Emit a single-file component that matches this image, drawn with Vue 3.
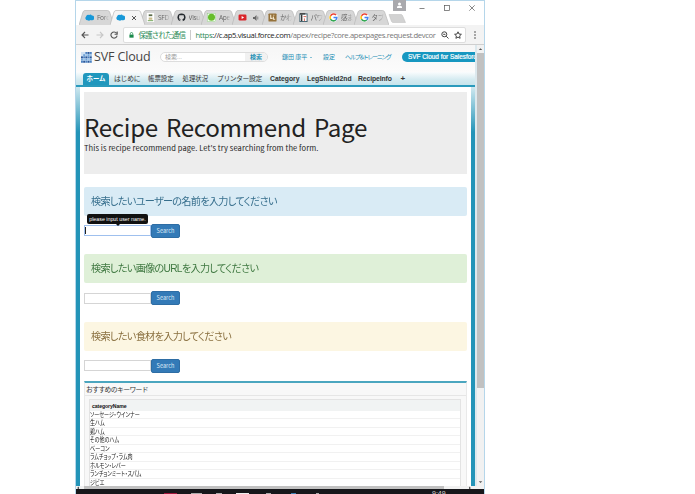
<template>
  <div class="screen">
    <div class="window">
      <div class="titlebar">
        <div class="tabs">
          <div class="tab" :class="{ active: tab.active }" v-for="(tab, index) in tabs" :key="index">
            <svg class="shape" viewBox="0 0 35 15">
              <path d="M0 15 L4 2 Q4.6 .5 6 .5 H28.5 Q30 .5 30.6 2 L35 15" />
            </svg>
            <svg class="icon" viewBox="0 0 10 10">
              <path v-if="tab.icon === 'cloud'" fill="#1798d8" d="M2.8 8a2.3 2.3 0 0 1-1.6-4A2.2 2.2 0 0 1 4.6 2.300a2 2 0 0 1 3 .5A2.600 2.600 0 0 1 7.800 8Q6.500 8.300 6 7.900 4.500 9 2.800 8Z" />
              <g v-else-if="tab.icon === 'sfdc'">
                <rect x="1" y="0" width="8" height="10" fill="#fff" />
                <path d="M3 1.500h4v2H3z" fill="#5c6c4a" />
                <path d="M3 5h4v2.500H3z" fill="#c9bd8b" />
                <path d="M2 8.500h6" stroke="#6ba04e" />
              </g>
              <path v-else-if="tab.icon === 'github'" fill="#24292e" d="M5 .6A4.400 4.400 0 0 0 3.600 9.200V8C2.400 8.200 2.200 7.400 1.800 7 2.700 6.800 2.900 7.800 3.700 7.400 3.800 7 4 6.800 4.100 6.700 2.700 6.500 2.200 5.800 2.200 4.600 2.200 4 2.400 3.600 2.700 3.300 2.600 2.900 2.600 2.500 2.800 2.100 3.200 2.100 3.600 2.400 4 2.600H6C6.400 2.400 6.800 2.100 7.200 2.100 7.400 2.500 7.400 2.900 7.300 3.300 7.600 3.600 7.800 4 7.800 4.600 7.800 5.800 7.200 6.500 5.900 6.700 6.200 7 6.400 7.300 6.400 7.800V9.200A4.400 4.400 0 0 0 5 .6Z" />
              <g v-else-if="tab.icon === 'apex'">
                <rect x=".3" y=".3" width="9.400" height="9.400" fill="#f4fff0" stroke="#8ac67b" stroke-width=".5" />
                <circle cx="5" cy="4.600" r="3.900" fill="#66bd2b" />
              </g>
              <g v-else-if="tab.icon === 'youtube'">
                <rect x=".6" y="1.800" width="8.800" height="6.400" rx="1.300" fill="#d9252a" />
                <path d="M4 3.300 6.800 5 4 6.700Z" fill="#fff" />
              </g>
              <g v-else-if="tab.icon === 'brown'">
                <rect x=".5" y=".5" width="9" height="9" rx="1" fill="#96723a" />
                <path d="M3 2v4h2M6 4v3h2M6 2.500h1" fill="none" stroke="#f5ead0" stroke-width="1.200" />
              </g>
              <g v-else-if="tab.icon === 'note'">
                <rect x="1" y="1" width="8" height="8.500" fill="#fff" stroke="#395a68" />
                <path d="M1 1h6M3 2v7" stroke="#333" stroke-width="1.500" />
                <path d="M5 4h3M6 6v3" stroke="#d65a4b" />
              </g>
              <g v-else>
                <circle cx="5" cy="5" r="5" fill="#fff" />
                <g fill="none" stroke-width="1.700">
                  <path d="M7.900 2.300A3.800 3.800 0 0 0 1.700 3.200" stroke="#ea4335" />
                  <path d="M1.700 3.200a3.800 3.800 0 0 0 0 3.600" stroke="#fbbc05" />
                  <path d="M1.700 6.800a3.800 3.800 0 0 0 5.800 1" stroke="#34a853" />
                  <path d="M7.500 7.800Q8.700 6.800 8.700 5H5" stroke="#4285f4" />
                </g>
              </g>
            </svg>
            <svg v-if="tab.active" class="close" viewBox="0 0 6 6"><path d="M1 1l4 4M5 1L1 5" /></svg>
            <svg v-else-if="tab.icon === 'youtube'" class="sound" viewBox="0 0 6 6">
              <path d="M0 2h1.500L3.500 0v6L1.500 4H0zM4.500 1.500v3h.7v-3z" />
            </svg>
            <span v-else class="label">{{ tab.label }}</span>
          </div>
          <svg class="newtab" viewBox="0 0 18 9"><path d="M1 .5H13Q14 .5 14.500 1.500L17.500 8.500H5Q4 8.500 3.500 7.500Z" /></svg>
        </div>
        <div class="controls">
          <svg class="user" viewBox="0 0 13 11"><rect width="13" height="11" /><circle cx="6.500" cy="4" r="1.500" /><path d="M4 8V6.500Q6.500 5 9 6.500V8Z" /></svg>
          <svg viewBox="0 0 8 8"><path d="M1.500 4.500h5" /></svg>
          <svg viewBox="0 0 8 8"><rect x="1.500" y="1.500" width="5" height="5" /></svg>
          <svg viewBox="0 0 8 8"><path d="M1.300 1.300l5.400 5.400M6.700 1.300L1.300 6.700" /></svg>
        </div>
      </div>

      <div class="toolbar">
        <svg class="nav" viewBox="0 0 8 8"><path d="M7.500 4H1M4 1 1 4l3 3" /></svg>
        <svg class="nav off" viewBox="0 0 8 8"><path d="M.5 4H7M4 1l3 3-3 3" /></svg>
        <svg class="nav" viewBox="0 0 8 8"><path d="M6.600 2.300A3.100 3.100 0 1 0 7.100 4.600M7.200.6v2.600H4.600" /></svg>
        <div class="address">
          <svg class="lock" viewBox="0 0 6 7"><path d="M.5 3h5v3.700h-5z" /><path class="ring" d="M1.600 3V1.900a1.400 1.400 0 0 1 2.800 0V3" /></svg>
          <span class="secure">保護された通信</span>
          <span class="sep"></span>
          <span class="url"><b>https</b>://c.ap5.visual.force.com<i>/apex/recipe?core.apexpages.request.devcor</i></span>
          <svg class="mag" viewBox="0 0 8 8"><circle cx="3.300" cy="3.300" r="2.500" /><path d="M5.200 5.200 7.500 7.500M2.200 3.300h2.200" /></svg>
          <svg class="star" viewBox="0 0 8 8"><path d="M4 .8l1 2.200 2.400.3-1.800 1.600.5 2.400L4 6.100 1.900 7.300l.5-2.400L.6 3.300 3 3Z" /></svg>
        </div>
        <svg class="dots" viewBox="0 0 2 8"><circle cx="1" cy="1" r=".8" /><circle cx="1" cy="4" r=".8" /><circle cx="1" cy="7" r=".8" /></svg>
      </div>

      <div class="viewport">
        <div class="page">
          <header class="header">
            <svg class="logo" viewBox="0 0 11 11">
              <rect width="11" height="11" fill="#cfe0f2" />
              <rect v-for="(c, i) in logoCells" :key="i" :x="c.x" :y="c.y" width="1.900" height="1.900" :fill="c.color" />
            </svg>
            <span class="brand">SVF Cloud</span>
            <div class="search"><span class="hint">検索...</span><span class="go">検索</span></div>
            <span class="link person">鎌田 康平<em></em></span>
            <span class="link setup">設定</span>
            <span class="link help">ヘルプ＆トレーニング</span>
            <span class="appname">SVF Cloud for Salesforce</span>
          </header>
          <nav class="menu">
            <span class="home">ホーム</span>
            <span class="m1">はじめに</span>
            <span class="m2">帳票設定</span>
            <span class="m3">処理状況</span>
            <span class="m4">プリンター設定</span>
            <span class="m5 latin">Category</span>
            <span class="m6 latin">LegShield2nd</span>
            <span class="m7 latin">RecipeInfo</span>
            <span class="latin plus">+</span>
          </nav>
          <main class="main">
            <div class="jumbotron">
              <h1>Recipe Recommend Page</h1>
              <p>This is recipe recommend page. Let's try searching from the form.</p>
            </div>
            <section class="form" v-for="form in forms" :key="form.kind">
              <div class="alert" :class="form.kind"><span>{{ form.title }}</span></div>
              <div class="row">
                <div class="input" :class="{ focus: form.tip }">
                  <div v-if="form.tip" class="tooltip">{{ form.tip }}</div>
                </div>
                <button>Search</button>
              </div>
            </section>
            <section class="panel">
              <h2>おすすめのキーワード</h2>
              <div class="table">
                <div class="th">categoryName</div>
                <div class="td" v-for="item in categories" :key="item"><span>{{ item }}</span></div>
              </div>
            </section>
          </main>
        </div>
        <div class="vscroll">
          <svg viewBox="0 0 8 8"><path d="M2 5h4L4 3Z" /></svg>
          <div class="thumb"></div>
          <svg viewBox="0 0 8 8"><path d="M2 3h4L4 5Z" /></svg>
        </div>
      </div>
      <div class="hscroll">
        <svg viewBox="0 0 4 4"><path d="M3 .5v3L1 2Z" /></svg>
        <div></div>
        <svg viewBox="0 0 4 4"><path d="M1 .5v3L3 2Z" /></svg>
      </div>
      <div class="taskbar">
        <i class="red"></i><i class="grey"></i><i class="grey small"></i><i class="white"></i><i class="dot"></i><i class="dot blue"></i><i class="dot tiny"></i>
        <span>9:49</span>
      </div>
    </div>
  </div>
</template>

<script setup>
import { ref } from 'vue'

const tabs = ref([
  { icon: 'cloud', label: 'Forc' },
  { icon: 'cloud', label: '', active: true },
  { icon: 'sfdc', label: 'SFD' },
  { icon: 'github', label: 'Visu' },
  { icon: 'apex', label: 'Ape' },
  { icon: 'youtube', label: '' },
  { icon: 'brown', label: 'かわ' },
  { icon: 'note', label: 'パワ' },
  { icon: 'google', label: '感ま' },
  { icon: 'google', label: 'タブ' }
])

const forms = ref([
  { kind: 'info', title: '検索したいユーザーの名前を入力してください', tip: 'please input user name.' },
  { kind: 'success', title: '検索したい画像のURLを入力してください' },
  { kind: 'warning', title: '検索したい食材を入力してください' }
])

const categories = ref([
  'ソーセージ・ウインナー',
  '生ハム',
  '鶏ハム',
  'その他のハム',
  'ベーコン',
  'ラムチョップ・ラム肉',
  'ホルモン・レバー',
  'ランチョンミート・スパム',
  'ジビエ'
])

const shades = ['#4b80c0', '#6fa3d8', '#2b5596', '#9cc3e8']
const logoCells = []
for (let row = 0; row < 5; row++) {
  for (let col = 0; col < 5; col++) {
    if (row + col > 1) {
      logoCells.push({ x: col * 2.2, y: row * 2.2, color: shades[(row * 3 + col * 2) % 4] })
    }
  }
}
</script>

<style>
body {
  background: #fff;
  overflow: hidden;
}
</style>

<style scoped>
* {
  box-sizing: border-box;
}
.screen {
  height: 494px;
  padding-left: 75px;
  overflow: hidden;
  font-family: "Liberation Sans", "Noto Sans CJK JP", sans-serif;
  white-space: nowrap;
}
.window {
  width: 410px;
  height: 494px;
  display: flex;
  flex-direction: column;
  border: 1px solid #b5d6ea;
  border-bottom: none;
}
.window > div {
  flex: none;
}
svg {
  display: block;
  flex: none;
}

/* browser tabs */
.titlebar {
  height: 24px;
  display: flex;
  justify-content: space-between;
  background: #fff;
}
.tabs {
  width: 310px;
  display: flex;
  padding: 9px 0 0 3px;
}
.tab {
  position: relative;
  flex: none;
  display: flex;
  align-items: center;
  width: 35px;
  height: 15px;
  margin-right: -4.5px;
  padding-left: 6px;
}
.shape {
  position: absolute;
  left: 0;
  top: 0;
  width: 35px;
  height: 15px;
  fill: #d7d7d7;
  stroke: #b8b8b8;
  stroke-width: 0.7;
}
.active {
  z-index: 2;
}
.active .shape {
  fill: #f4f4f4;
}
.icon {
  position: relative;
  width: 9px;
  height: 9px;
}
.label {
  position: relative;
  width: 12px;
  margin-left: 3px;
  overflow: hidden;
  color: #666;
  font: 6.6px/10px "Open Sans", "Noto Sans CJK JP", sans-serif;
  letter-spacing: -0.3px;
  -webkit-mask-image: linear-gradient(to right, #000 50%, transparent);
}
.close,
.sound {
  position: relative;
  width: 6px;
  height: 6px;
  margin-left: 6px;
}
.close {
  stroke: #555;
}
.sound {
  fill: #666;
}
.newtab {
  width: 18px;
  height: 9px;
  margin: 4px 0 0 4px;
  fill: #d2d2d2;
  stroke: #bdbdbd;
  stroke-width: 0.5;
}
.controls {
  display: flex;
  gap: 17px;
  padding-right: 8px;
}
.controls svg {
  width: 8px;
  height: 8px;
  margin-top: 3px;
  fill: none;
  stroke: #555;
  stroke-width: 0.7;
}
.controls .user {
  width: 13px;
  height: 11px;
  margin: -1px -5px 0 0;
  stroke: none;
  fill: #fff;
}
.controls .user rect {
  fill: #a9a9ad;
}

/* address bar */
.toolbar {
  height: 20px;
  display: flex;
  align-items: center;
  padding: 0 8px 0 5px;
  background: #f3f3f3;
  border-bottom: 1px solid #cfcfcf;
}
.nav {
  width: 8px;
  height: 8px;
  margin-right: 6.5px;
  fill: none;
  stroke: #555;
  stroke-width: 1.1;
}
.off {
  stroke: #c8c8c8;
}
.address {
  flex: 1;
  height: 16px;
  display: flex;
  align-items: center;
  margin: 0 8px 0 -2px;
  padding: 0 3px 0 5px;
  background: #fff;
  border: 1px solid #dedede;
  border-radius: 2px;
}
.lock {
  width: 5px;
  height: 6px;
  fill: #1a8a4b;
}
.ring {
  fill: none;
  stroke: #1a8a4b;
  stroke-width: 0.9;
}
.secure {
  width: 47px;
  margin-left: 5px;
  color: #2b8a55;
  font: 7.5px/12px "Noto Sans CJK JP", sans-serif;
  letter-spacing: -0.85px;
}
.sep {
  width: 1px;
  height: 10px;
  margin: 0 5px 0 4px;
  background: #ccc;
}
.url {
  flex: 1;
  width: 0;
  color: #222;
  font: 7.7px/12px "Open Sans", sans-serif;
  letter-spacing: -0.36px;
}
.url b {
  color: #2b8a55;
  font-weight: 400;
}
.url i {
  color: #777;
  font-style: normal;
}
.mag,
.star {
  width: 8px;
  height: 8px;
  fill: none;
  stroke: #444;
  stroke-width: 1;
}
.star {
  margin-left: 5px;
}
.dots {
  width: 2px;
  height: 8px;
  fill: #444;
}

/* page */
.viewport {
  height: 441px;
  display: flex;
}
.page {
  width: 399px;
  height: 441px;
  overflow: hidden;
  background: #f9f9f9;
}
.header {
  height: 27px;
  display: flex;
  align-items: center;
  padding: 0 0 3px 5px;
  background: linear-gradient(#f6f6f6, #fbfbfb);
}
.logo {
  width: 11px;
  height: 11px;
}
.brand {
  width: 58px;
  margin-left: 2px;
  color: #444;
  font: 12.5px/14px "Open Sans", sans-serif;
  letter-spacing: -0.15px;
}
.search {
  width: 108px;
  height: 10px;
  display: flex;
  justify-content: space-between;
  align-items: center;
  margin: 0 14px 0 8px;
  border: 1px solid #ddd;
  border-radius: 5px;
  background: #fff;
  font-size: 6px;
  line-height: 8px;
}
.hint {
  padding-left: 4px;
  color: #999;
}
.go {
  width: 22px;
  border-radius: 0 5px 5px 0;
  background: #f1f1f1;
  color: #1b8fb5;
  font-weight: 700;
  text-align: center;
}
.link {
  color: #168bb3;
  font-size: 6px;
  line-height: 8px;
}
.person {
  width: 41px;
  letter-spacing: -0.1px;
}
.person em {
  display: inline-block;
  margin: 0 0 1px 3px;
  border: 1.5px solid transparent;
  border-top-color: #168bb3;
  border-bottom: none;
}
.setup {
  width: 22px;
}
.help {
  width: 57px;
  letter-spacing: -0.85px;
  font-feature-settings: "palt";
}
.appname {
  flex: 1;
  height: 10px;
  overflow: hidden;
  padding-left: 6px;
  border-radius: 5px 0 0 5px;
  background: #1797c0;
  color: #fff;
  font-size: 6.4px;
  line-height: 10px;
  -webkit-text-stroke: 0.2px #fff;
}
.menu {
  height: 15px;
  display: flex;
  align-items: flex-end;
  padding-left: 7px;
  background: linear-gradient(#fafcfd, #d3eaf0 60%, #c6e4ec);
  border-bottom: 2px solid #2a9abc;
  color: #333;
  font: 6.8px/12px "Liberation Sans", "Noto Sans CJK JP", sans-serif;
}
.menu .home {
  width: 26px;
  border-radius: 3px 3px 0 0;
  background: #2097bd;
  color: #fff;
  font-weight: 700;
  font-size: 6.4px;
  text-align: center;
}
.m1 {
  width: 34px;
  margin-left: 5px;
  letter-spacing: -0.2px;
}
.m2,
.m3 {
  width: 34.5px;
  font-size: 6.4px;
}
.m4 {
  width: 53px;
  letter-spacing: -0.4px;
}
.m5 {
  width: 37px;
}
.m6 {
  width: 51px;
}
.m7 {
  width: 42.5px;
  letter-spacing: -0.1px;
}
.latin {
  font-weight: 700;
}
.plus {
  font-size: 8px;
}
.main {
  height: 399px;
  padding: 5px 4px 0;
  border: solid #2394b8;
  border-width: 0 4px;
  border-image: linear-gradient(#cfe8ef, #2394b8 45px, #2394b8) 0 4;
  background: #fff;
}
.jumbotron {
  height: 82px;
  padding-top: 21px;
  background: #ededed;
  color: #222;
}
.jumbotron h1 {
  margin: 0;
  font: 24.2px/28px "Noto Sans CJK JP", sans-serif;
  letter-spacing: -0.33px;
  word-spacing: 3px;
}
.jumbotron p {
  margin: 2px 0 0;
  font: 7.5px/9px "Noto Sans CJK JP", sans-serif;
  letter-spacing: 0.11px;
}
.form {
  height: 67.5px;
}
.jumbotron + .form {
  margin-top: 12.5px;
}
.alert {
  height: 29px;
  padding-left: 7px;
  border-radius: 2px;
  font: 10.6px/29px "Liberation Sans", "Noto Sans CJK JP", sans-serif;
}
.alert span {
  display: inline-block;
  letter-spacing: -0.75px;
  font-feature-settings: "palt";
  transform: scaleX(0.96);
  transform-origin: left;
}
.info {
  background: #d9ebf5;
  color: #376f8d;
}
.success {
  background: #dff0d8;
  color: #3f7841;
}
.warning {
  background: #fcf6e2;
  color: #8a7040;
}
.row {
  display: flex;
  align-items: center;
  margin-top: 8px;
}
.input {
  position: relative;
  width: 67px;
  height: 11px;
  border: 1px solid #d5d5d5;
  background: #fff;
}
.focus {
  border-color: #9fc0ee;
}
.focus::before {
  content: "";
  display: block;
  width: 1px;
  height: 7px;
  margin-top: 1px;
  background: #222;
}
.tooltip {
  position: absolute;
  left: 2px;
  top: -12px;
  width: 61px;
  height: 10px;
  border-radius: 2px;
  background: #111;
  color: #fff;
  font: 5.3px/10px "Liberation Sans", sans-serif;
  text-align: center;
}
.tooltip::after {
  content: "";
  position: absolute;
  left: 29px;
  top: 10px;
  border: 2px solid transparent;
  border-top-color: #111;
}
button {
  width: 29px;
  height: 14px;
  padding: 0;
  border: 1px solid #2e6da4;
  border-radius: 2px;
  background: #337ab7;
  color: #dbe9f5;
  font: 5.6px/12px "Noto Sans CJK JP", sans-serif;
}
.panel {
  height: 120px;
  margin-top: -8.5px;
  border: 1px solid #e9e9e9;
  border-top: 2px solid #4ba6bf;
  background: #f8f8f8;
}
.panel h2 {
  height: 13px;
  margin: 0;
  padding-left: 1px;
  border-bottom: 1px solid #e6e6e6;
  color: #333;
  font: 6.8px/12px "Noto Sans CJK JP", sans-serif;
  letter-spacing: -0.6px;
}
.table {
  margin: 3px 5px 0 4px;
  border: 1px solid #e3e3e3;
  background: #fff;
}
.th {
  height: 11px;
  padding-left: 2px;
  background: #f1f3f3;
  color: #111;
  font: bold 5.2px/12px "Liberation Sans", sans-serif;
  letter-spacing: -0.1px;
}
.td {
  height: 8.5px;
  border-bottom: 1px solid #f1f1f1;
  color: #222;
  font: 6.6px/7.5px "Noto Sans CJK JP", sans-serif;
  font-feature-settings: "palt";
}
.td span {
  display: inline-block;
  transform: scaleX(0.77);
  transform-origin: left;
}
.vscroll {
  width: 9px;
  display: flex;
  flex-direction: column;
  background: #f1f1f1;
  border-left: 2px solid #dce8ed;
}
.vscroll svg {
  width: 7px;
  height: 8px;
  fill: #555;
}
.thumb {
  height: 335px;
  margin-bottom: auto;
  background: #c1c1c1;
}
.hscroll {
  height: 3px;
  display: flex;
  align-items: center;
  background: #f1f1f1;
}
.hscroll div {
  width: 360px;
  height: 3px;
  margin: 0 24px 0 4px;
  background: #c1c1c1;
}
.hscroll svg {
  width: 4px;
  height: 4px;
  fill: #555;
}
.taskbar {
  height: 5px;
  display: flex;
  align-items: flex-end;
  gap: 14px;
  padding-left: 88px;
  overflow: hidden;
  background: #17171b;
}
.taskbar i {
  width: 11px;
  height: 1px;
  background: #aaa;
}
.taskbar .red {
  width: 13px;
  background: #a3163c;
}
.taskbar .small {
  width: 6px;
}
.taskbar .white {
  width: 13px;
  background: #eee;
}
.taskbar .dot {
  width: 5px;
  margin: 0 3px;
}
.taskbar .blue {
  background: #3c7fb2;
}
.taskbar .tiny {
  width: 3px;
}
.taskbar span {
  height: 3px;
  margin-left: 96px;
  color: #ddd;
  font-size: 7px;
  line-height: 6px;
}
</style>
